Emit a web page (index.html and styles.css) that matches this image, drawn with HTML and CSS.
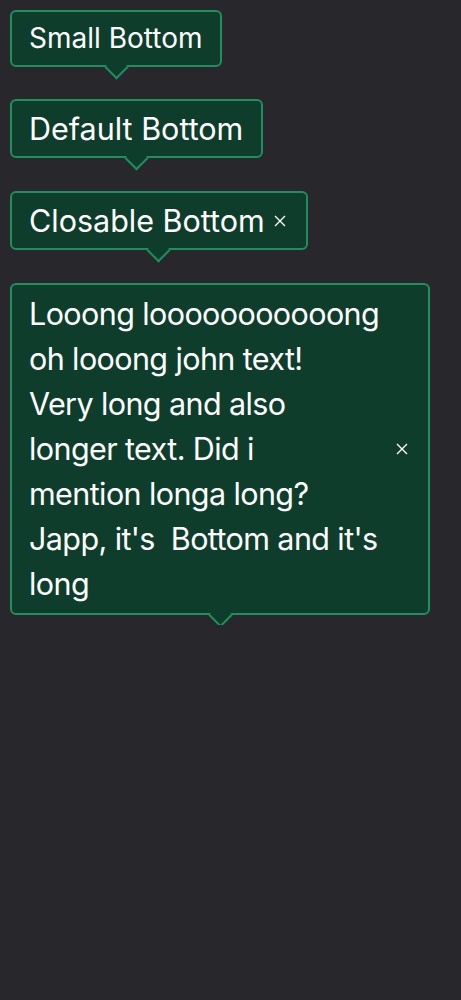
FILE: index.html
```html
<!DOCTYPE html>
<html>
<head>
<meta charset="utf-8">
<link rel="stylesheet" href="styles.css">
</head>
<body>
<div class="stack">
  <div class="tip tip-small"><span class="tip-text">Small Bottom</span></div>
  <div class="tip"><span class="tip-text">Default Bottom</span></div>
  <div class="tip tip-closable"><span class="tip-text">Closable Bottom</span><span class="tip-close"><svg viewBox="0 0 12 12" width="12" height="12"><path d="M1 1L11 11M11 1L1 11" stroke="#fff" stroke-width="1.4" fill="none"/></svg></span></div>
  <div class="tip tip-closable tip-long"><span class="tip-text">Looong looooooooooong oh looong john text!<br>Very long and also<br>longer text. Did i<br>mention longa long?<br>Japp, it's&nbsp; Bottom and it's long</span><span class="tip-close"><svg viewBox="0 0 12 12" width="12" height="12"><path d="M1 1L11 11M11 1L1 11" stroke="#fff" stroke-width="1.4" fill="none"/></svg></span></div>
</div>
</body>
</html>
```
FILE: styles.css
```css
html, body {
  margin: 0;
  background: #28272c;
}
body {
  padding: 10px;
  font-family: Inter, "Noto Sans", sans-serif;
}
.stack {
  display: flex;
  flex-direction: column;
  align-items: flex-start;
  gap: 33px;
}
.tip {
  position: relative;
  display: flex;
  align-items: center;
  background: #0e3e2b;
  border: 2px solid #1f8f60;
  border-radius: 6px;
  color: #ffffff;
  font-size: 30.5px;
  line-height: 45px;
  padding: 5px 18px 5px 17px;
}
.tip-small {
  font-size: 28px;
  padding: 4px 18px 4px 17px;
  margin-bottom: -1px;
}
.tip::after {
  content: "";
  position: absolute;
  left: 50%;
  bottom: -2px;
  width: 17px;
  height: 17px;
  margin-left: -8.5px;
  margin-bottom: -8.5px;
  background: #0e3e2b;
  border-right: 2px solid #1f8f60;
  border-bottom: 2px solid #1f8f60;
  transform: rotate(45deg);
  box-sizing: border-box;
}
.tip-closable {
  padding-right: 20px;
}
.tip-close {
  display: flex;
  margin-left: 9px;
}
.tip-long {
  width: 420px;
  box-sizing: border-box;
  padding-top: 6px;
  padding-bottom: 7px;
}
.tip-long .tip-text {
  flex: 1;
  letter-spacing: -0.6px;
}
```
